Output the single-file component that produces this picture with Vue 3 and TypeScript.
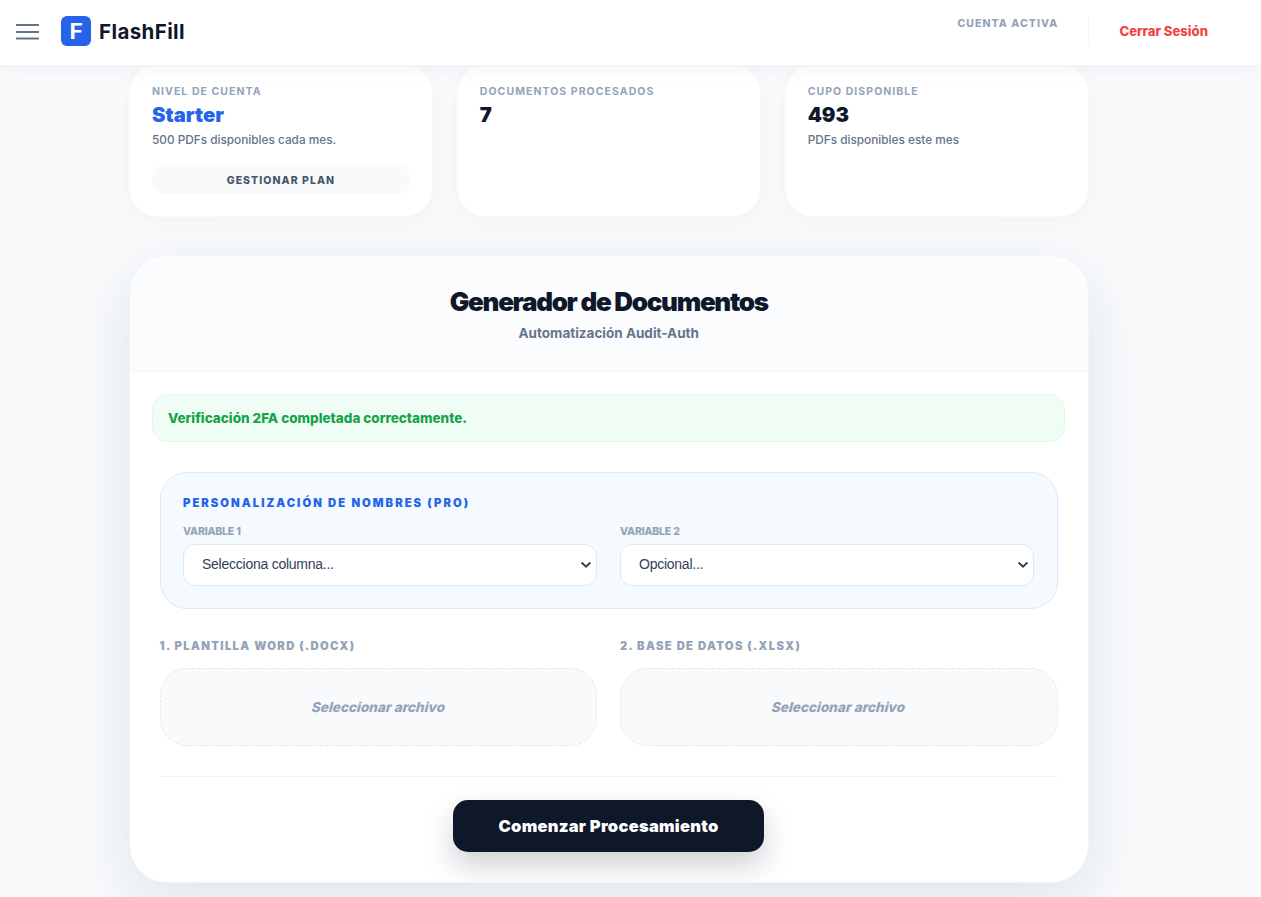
<script setup lang="ts">
interface Stat {
  label: string
  value: string
  note?: string
  accent?: boolean
  action?: string
}

const stats: Stat[] = [
  { label: 'Nivel de cuenta', value: 'Starter', note: '500 PDFs disponibles cada mes.', accent: true, action: 'Gestionar plan' },
  { label: 'Documentos procesados', value: '7' },
  { label: 'Cupo disponible', value: '493', note: 'PDFs disponibles este mes' },
]

const variables = [
  { id: 'variable-1', label: 'Variable 1', placeholder: 'Selecciona columna...' },
  { id: 'variable-2', label: 'Variable 2', placeholder: 'Opcional...' },
]

const files = ['1. Plantilla Word (.docx)', '2. Base de datos (.xlsx)']
</script>

<template>
  <div class="page">
    <header class="topbar">
      <button class="menu" aria-label="Menú">
        <svg width="23" height="16" viewBox="0 0 23 16"><path d="M0.8 1h21.4M0.8 8h21.4M0.8 14.5h21.4" stroke="#64748b" stroke-width="2" stroke-linecap="round" /></svg>
      </button>
      <div class="logo"><span>F</span></div>
      <div class="brand">FlashFill</div>
      <div class="account">Cuenta activa</div>
      <a class="logout">Cerrar Sesión</a>
    </header>

    <main class="content">
      <section class="stats">
        <article v-for="s in stats" :key="s.label" class="stat">
          <div class="stat-label">{{ s.label }}</div>
          <div class="stat-value" :class="{ accent: s.accent }">{{ s.value }}</div>
          <div v-if="s.note" class="stat-note">{{ s.note }}</div>
          <button v-if="s.action" class="plan">{{ s.action }}</button>
        </article>
      </section>

      <section class="generator">
        <div class="heading">
          <h1>Generador de Documentos</h1>
          <p>Automatización Audit-Auth</p>
        </div>
        <div class="notice"><span>Verificación 2FA completada correctamente.</span></div>
        <form class="form" @submit.prevent>
          <div class="naming">
            <h2>Personalización de nombres (PRO)</h2>
            <div class="pair variables">
              <div v-for="v in variables" :key="v.id" class="field">
                <label>{{ v.label }}</label>
                <div class="select">
                  <span>{{ v.placeholder }}</span>
                  <svg width="12" height="8" viewBox="0 0 12 8"><path d="M1.6 1.5L6 5.7L10.4 1.5" fill="none" stroke="#334155" stroke-width="2" /></svg>
                </div>
              </div>
            </div>
          </div>
          <div class="pair uploads">
            <div v-for="f in files" :key="f">
              <div class="file-label">{{ f }}</div>
              <div class="drop"><span>Seleccionar archivo</span></div>
            </div>
          </div>
          <div class="actions">
            <button class="start"><span>Comenzar Procesamiento</span></button>
          </div>
        </form>
      </section>
    </main>
  </div>
</template>

<style>
html, body { margin: 0; overflow: hidden; background: #f8fafc; }
</style>

<style scoped>
* { box-sizing: border-box; }
.page {
  height: 897px;
  overflow: hidden;
  background: #f8fafc;
  color: #0f172a;
  font-family: Inter, "Liberation Sans", sans-serif;
}
button { border: 0; padding: 0; font-family: inherit; }
h1, h2, p { margin: 0; }
.topbar {
  position: relative;
  z-index: 2;
  display: flex;
  align-items: center;
  height: 66px;
  padding: 0 53px 4px 16px;
  background: #fff;
  border-bottom: 1px solid #f1f5f9;
  box-shadow: 0 4px 18px rgba(15, 23, 42, 0.04);
}
.menu { display: flex; width: 23px; height: 16px; margin-top: 2px; background: none; }
.logo {
  width: 30px;
  height: 30px;
  margin-left: 22px;
  border-radius: 6px;
  background: #2563eb;
  color: #fff;
  font-size: 21px;
  font-weight: 700;
  line-height: 32px;
  text-align: center;
}
.logo span { display: inline-block; transform: scaleX(1.08); }
.brand {
  margin-left: 8px;
  padding-top: 2px;
  font-size: 20.5px;
  font-weight: 680;
  letter-spacing: 0.4px;
  line-height: 30px;
}
.account {
  margin: 0 30px 14px auto;
  padding-top: 1px;
  color: #94a3b8;
  font-size: 10.5px;
  font-weight: 800;
  letter-spacing: 1.05px;
  line-height: 14px;
  text-transform: uppercase;
}
.logout {
  padding-left: 30px;
  border-left: 1px solid #f1f5f9;
  color: #ef4444;
  font-size: 13.1px;
  font-weight: 800;
  line-height: 28px;
}
.content { width: 959.5px; margin-left: 129px; }
.stats { display: grid; grid-template-columns: repeat(3, 1fr); gap: 24px; }
.stat {
  height: 153px;
  margin-top: -2px;
  padding: 20px 22px 0 22px;
  border: 1px solid #f8fafc;
  border-radius: 29px;
  background: #fff;
  box-shadow: 0 4px 18px rgba(15, 23, 42, 0.04);
}
.stat-label {
  color: #94a3b8;
  font-size: 10.5px;
  font-weight: 750;
  letter-spacing: 1.05px;
  line-height: 14px;
  text-transform: uppercase;
}
.stat-value { margin-top: 2px; font-size: 20.25px; font-weight: 900; line-height: 28px; }
.accent { color: #2563eb; }
.stat-note { margin-top: 3px; color: #64748b; font-size: 11.8px; font-weight: 540; line-height: 16px; }
.plan {
  width: 100%;
  height: 29px;
  margin-top: 17px;
  border-radius: 12px;
  background: #f8fafc;
  color: #475569;
  font-size: 10.5px;
  font-weight: 800;
  letter-spacing: 1.05px;
  line-height: 31px;
  text-transform: uppercase;
}
.generator {
  height: 628px;
  margin-top: 38px;
  overflow: hidden;
  border: 1px solid #f1f5f9;
  border-radius: 38px;
  background: #fff;
  box-shadow: 0 20px 60px rgba(15, 45, 75, 0.1);
}
.heading {
  height: 116px;
  padding-top: 29px;
  border-bottom: 1px solid #f1f5f9;
  background: #fbfcfe;
  text-align: center;
}
h1 { font-size: 26px; font-weight: 880; letter-spacing: -1.3px; line-height: 34px; }
.heading p { margin-top: 5px; color: #64748b; font-size: 13.5px; font-weight: 700; line-height: 18px; }
.notice {
  height: 48px;
  margin: 22px 22.5px 0 22px;
  padding: 0 15px;
  border: 1px solid #dcfce7;
  border-radius: 15px;
  background: #f0fdf4;
  color: #16a34a;
  font-size: 13.5px;
  font-weight: 780;
  line-height: 46px;
}
.form { padding: 30px 30px 0 29.5px; }
.naming {
  height: 137px;
  padding: 22px 22.5px 0;
  border: 1px solid #dbeafe;
  border-radius: 27px;
  background: #f5faff;
}
h2 {
  color: #2563eb;
  font-size: 11.25px;
  font-weight: 900;
  letter-spacing: 2.02px;
  line-height: 16px;
  text-transform: uppercase;
}
.pair { display: grid; grid-template-columns: 1fr 1fr; gap: 23px; }
.variables { margin-top: 14px; }
label {
  display: block;
  color: #94a3b8;
  font-size: 10.5px;
  font-weight: 800;
  letter-spacing: -0.2px;
  line-height: 14px;
  text-transform: uppercase;
}
.select {
  display: flex;
  align-items: center;
  justify-content: space-between;
  height: 42px;
  margin-top: 5px;
  padding: 0 4px 1px 18px;
  border: 1px solid #e2e8f0;
  border-radius: 12px;
  background: #fff;
  color: #334155;
  font-family: "Liberation Sans", Arial, sans-serif;
  font-size: 14px;
  letter-spacing: -0.25px;
}
.select span { margin-top: -1px; }
.select svg { margin-top: 1px; }
.uploads { margin-top: 29px; }
.file-label {
  color: #94a3b8;
  font-size: 11.25px;
  font-weight: 900;
  letter-spacing: 1.35px;
  line-height: 16px;
  text-transform: uppercase;
}
.drop {
  height: 78px;
  margin-top: 14px;
  border: 1px dashed #e2e8f0;
  border-radius: 27px;
  background: #f8fafc;
  color: #94a3b8;
  font-size: 13.6px;
  font-weight: 780;
  line-height: 76px;
  text-align: center;
}
.drop span { display: inline-block; transform: skewX(-14deg); }
.actions {
  display: flex;
  justify-content: center;
  margin-top: 30px;
  padding-top: 23px;
  border-top: 1px solid #f1f5f9;
}
.start {
  width: 311px;
  height: 52px;
  border-radius: 15px;
  background: #0f172a;
  box-shadow: 0 14px 30px rgba(15, 23, 42, 0.2);
  color: #fff;
  font-size: 16.5px;
  font-weight: 900;
  letter-spacing: 0.27px;
}
</style>
